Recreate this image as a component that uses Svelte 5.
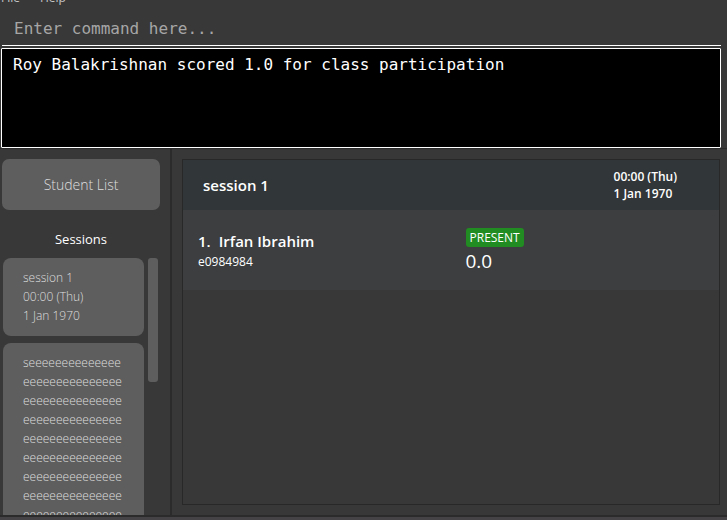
<script>
  let command = $state('');
  const result = 'Roy Balakrishnan scored 1.0 for class participation';
  const sessions = [
    { name: 'session 1', time: '00:00 (Thu)', date: '1 Jan 1970' },
    { name: 's' + 'e'.repeat(149), time: '00:00 (Thu)', date: '1 Jan 1970' }
  ];
  const current = sessions[0];
  const students = [
    { name: 'Irfan Ibrahim', id: 'e0984984', status: 'PRESENT', score: '0.0' }
  ];
</script>

<div class="window">
  <nav class="menu">
    <button>File</button>
    <button>Help</button>
  </nav>

  <div class="command">
    <input type="text" aria-label="Command" placeholder="Enter command here..." bind:value={command} />
  </div>
  <output class="result">{result}</output>

  <main>
    <aside>
      <button class="list-button">Student List</button>
      <h2>Sessions</h2>
      <div class="scroller">
        <div class="cards">
          {#each sessions as s}
            <button class="card">
              <span>{s.name}</span>
              <span>{s.time}</span>
              <span>{s.date}</span>
            </button>
          {/each}
        </div>
        <div class="track"><div class="thumb"></div></div>
      </div>
    </aside>

    <section class="detail">
      <div class="panel">
        <header>
          <h1>{current.name}</h1>
          <p>{current.time}<br />{current.date}</p>
        </header>
        {#each students as st, i}
          <article>
            <div class="who">
              <h3><span>{i + 1}.</span><span>{st.name}</span></h3>
              <p>{st.id}</p>
            </div>
            <div class="mark">
              <span class="badge">{st.status}</span>
              <span class="score">{st.score}</span>
            </div>
          </article>
        {/each}
      </div>
    </section>
  </main>
  <footer></footer>
</div>

<style>
  :global(body) {
    background: #383838;
  }
  .window {
    display: flex;
    flex-direction: column;
    height: 100vh;
    overflow: hidden;
    background: #383838;
    color: #fff;
    font-family: 'Open Sans', 'Noto Sans', sans-serif;
  }
  button {
    border: 0;
    margin: 0;
    padding: 0;
    background: none;
    color: inherit;
    font: inherit;
  }
  h1, h2, h3, p {
    margin: 0;
  }
  .menu {
    display: flex;
    flex: none;
    align-items: flex-end;
    gap: 20px;
    height: 8px;
    padding-left: 1px;
    color: #c4c4c4;
    font-size: 12px;
    line-height: 20px;
  }
  .command {
    flex: none;
    margin: 0 6px 2px 2px;
    border-bottom: 1px solid #fff;
  }
  .command input {
    display: block;
    box-sizing: border-box;
    width: 100%;
    height: 37px;
    padding: 4px 12px 0 12px;
    border: 0;
    outline: 0;
    background: none;
    color: #fff;
    font: 16px 'DejaVu Sans Mono', 'Liberation Mono', monospace;
  }
  .command input::placeholder {
    color: #a6a6a6;
    opacity: 1;
  }
  .result {
    display: block;
    flex: none;
    box-sizing: border-box;
    height: 100px;
    margin: 0 6px 0 1px;
    padding: 6px 11px;
    border: 1px solid #fff;
    border-radius: 1px;
    background: #000;
    font: 16px/20px 'DejaVu Sans Mono', 'Liberation Mono', monospace;
  }
  main {
    display: flex;
    flex: 1;
    min-height: 0;
    border-top: 1px solid #2b2b2b;
    border-bottom: 2px solid #2b2b2b;
  }
  aside {
    display: flex;
    flex: none;
    flex-direction: column;
    box-sizing: border-box;
    width: 172px;
    padding: 10px 10px 0 2px;
    border-right: 2px solid #2b2b2b;
  }
  .list-button {
    flex: none;
    height: 51px;
    border-radius: 7px;
    background: #5e5e5e;
    color: #dedede;
    font-size: 14px;
    font-weight: 300;
  }
  h2 {
    padding: 19px 0 9px;
    font-size: 13px;
    font-weight: 500;
    line-height: 20px;
    text-align: center;
  }
  .scroller {
    display: flex;
    flex: 1;
    gap: 4px;
    min-height: 0;
    padding: 0 2px 0 1px;
    overflow: hidden;
  }
  .cards {
    flex: 1;
    min-width: 0;
  }
  .card {
    display: block;
    box-sizing: border-box;
    width: 100%;
    margin-bottom: 7px;
    padding: 10px 20px 11px;
    border-radius: 8px;
    background: #5e5e5e;
    color: #dedede;
    font-size: 12px;
    font-weight: 300;
    line-height: 19px;
    text-align: left;
    word-break: break-word;
  }
  .card span {
    display: block;
  }
  .track {
    flex: none;
    width: 10px;
  }
  .thumb {
    height: 124px;
    border-radius: 3px;
    background: #5e5e5e;
  }
  .detail {
    display: flex;
    flex: 1;
    min-width: 0;
    padding: 10px 7px 10px 10px;
  }
  .panel {
    flex: 1;
    min-width: 0;
    border: 1px solid #282828;
  }
  header {
    display: flex;
    align-items: center;
    height: 50px;
    padding: 0 42px 0 20px;
    background: #313638;
  }
  header h1 {
    flex: 1;
    font-size: 15px;
    font-weight: 600;
  }
  header p {
    font-size: 12px;
    font-weight: 600;
    line-height: 17px;
  }
  article {
    display: grid;
    grid-template-columns: 1fr 1fr;
    column-gap: 14px;
    box-sizing: border-box;
    height: 80px;
    padding: 18px 0 0 15px;
    background: #3c3e3f;
  }
  h3 {
    display: flex;
    gap: 8px;
    padding-top: 3px;
    font-size: 15px;
    font-weight: 600;
    line-height: 20px;
  }
  .who p {
    font-size: 12px;
    line-height: 22px;
  }
  .mark {
    display: flex;
    flex-direction: column;
    align-items: flex-start;
  }
  .badge {
    padding: 0 4px;
    border-radius: 3px;
    background: #218c21;
    font-size: 12px;
    line-height: 19px;
  }
  .score {
    font-size: 19px;
    line-height: 28px;
  }
  footer {
    flex: none;
    height: 3px;
    background: #454345;
  }
</style>
